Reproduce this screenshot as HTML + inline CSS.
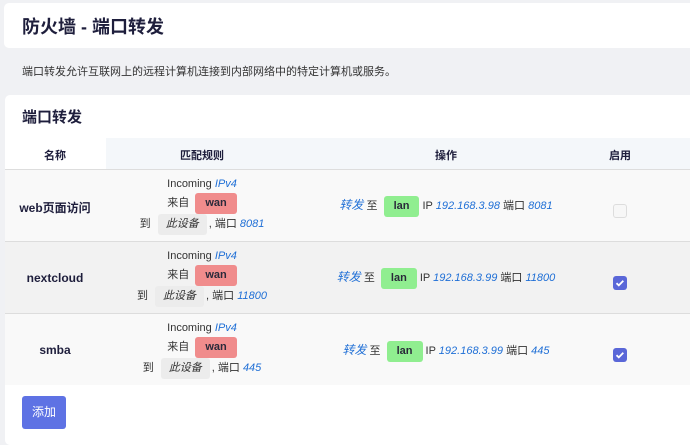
<!DOCTYPE html>
<html><head><meta charset="utf-8">
<style>
*{margin:0;padding:0;box-sizing:border-box}
body{width:690px;height:438px;background:#f0f1f4;font-family:"Liberation Sans","Noto Sans CJK SC",sans-serif;color:#32325d;position:relative;overflow:hidden;font-size:11px}
.a{position:absolute}
.card{background:#fff;border-radius:5px}
.h1{font-size:18px;font-weight:bold;color:#1e1e3c}
.t{position:absolute;text-align:center;white-space:nowrap;font-size:11px;color:#333}
.i{color:#1f6fd6;font-style:italic}
.wan{display:inline-block;background:#f08c8c;border-radius:3px;padding:0 10px;height:21px;line-height:21px;font-weight:bold;color:#2a2a3a;margin-left:3px}
.lan{display:inline-block;background:#90ee90;border-radius:3px;padding:0 10px;height:21px;line-height:21px;font-weight:bold;color:#2a2a3a;margin:0 3px}
.dev{display:inline-block;background:#ececec;border-radius:3px;padding:0 8px;height:21px;line-height:21px;font-style:italic;margin:0 2px 0 4px}
.name{position:absolute;width:100px;text-align:center;font-weight:bold;font-size:12px;color:#1e1e3c}
.cb{position:absolute;left:613px;width:14px;height:14px;border-radius:3px}
</style></head><body>
<div class="a card" style="left:4px;top:3px;width:700px;height:45px"></div>
<div class="a h1" style="left:22px;top:13px">防火墙 - 端口转发</div>
<div class="a" style="left:22px;top:63px;font-size:11px;color:#333">端口转发允许互联网上的远程计算机连接到内部网络中的特定计算机或服务。</div>
<div class="a card" style="left:5px;top:95px;width:700px;height:350px"></div>
<div class="a" style="left:22px;top:106px;font-size:15px;font-weight:bold;color:#1e1e3c">端口转发</div>
<div class="a" style="left:106px;top:138px;width:584px;height:31px;background:#f4f7fa"></div>
<div class="a" style="left:5px;top:169px;width:685px;height:1px;background:#ddd"></div>
<div class="t" style="left:5px;width:100px;top:147px;font-weight:bold;color:#1e1e3c">名称</div>
<div class="t" style="left:152px;width:100px;top:147px;font-weight:bold;color:#1e1e3c">匹配规则</div>
<div class="t" style="left:396px;width:100px;top:147px;font-weight:bold;color:#1e1e3c">操作</div>
<div class="t" style="left:570px;width:100px;top:147px;font-weight:bold;color:#1e1e3c">启用</div>

<div class="a" style="left:5px;top:170px;width:685px;height:71px;background:#f9f9f9"></div>
<div class="a" style="left:5px;top:241px;width:685px;height:1px;background:#ddd"></div>
<div class="a" style="left:5px;top:242px;width:685px;height:71px;background:#f2f2f2"></div>
<div class="a" style="left:5px;top:313px;width:685px;height:1px;background:#ddd"></div>
<div class="a" style="left:5px;top:314px;width:685px;height:71px;background:#f9f9f9"></div>

<!-- row1 -->
<div class="name" style="left:5px;top:199px">web页面访问</div>
<div class="t" style="left:102px;width:200px;top:178px">Incoming <span class="i">IPv4</span></div>
<div class="t" style="left:102px;width:200px;top:193px;line-height:21px">来自 <span class="wan">wan</span></div>
<div class="t" style="left:102px;width:200px;top:214px;line-height:21px">到 <span class="dev">此设备</span>, 端口 <span class="i">8081</span></div>
<div class="t" style="left:296px;width:300px;top:195px;line-height:21px"><span class="i" style="font-size:12px">转发</span> 至 <span class="lan">lan</span>IP <span class="i">192.168.3.98</span> 端口 <span class="i">8081</span></div>
<div class="cb" style="top:204px;background:#f7f7f7;border:1px solid #ddd"></div>

<!-- row2 -->
<div class="name" style="left:5px;top:271px">nextcloud</div>
<div class="t" style="left:102px;width:200px;top:250px">Incoming <span class="i">IPv4</span></div>
<div class="t" style="left:102px;width:200px;top:265px;line-height:21px">来自 <span class="wan">wan</span></div>
<div class="t" style="left:102px;width:200px;top:286px;line-height:21px">到 <span class="dev">此设备</span>, 端口 <span class="i">11800</span></div>
<div class="t" style="left:296px;width:300px;top:267px;line-height:21px"><span class="i" style="font-size:12px">转发</span> 至 <span class="lan">lan</span>IP <span class="i">192.168.3.99</span> 端口 <span class="i">11800</span></div>
<div class="cb" style="top:276px;background:#5a67d8"><svg width="14" height="14" viewBox="0 0 14 14"><path d="M3.5 7.2l2.3 2.2 4.5-4.6" stroke="#fff" stroke-width="1.8" fill="none"/></svg></div>

<!-- row3 -->
<div class="name" style="left:5px;top:343px">smba</div>
<div class="t" style="left:102px;width:200px;top:322px">Incoming <span class="i">IPv4</span></div>
<div class="t" style="left:102px;width:200px;top:337px;line-height:21px">来自 <span class="wan">wan</span></div>
<div class="t" style="left:102px;width:200px;top:358px;line-height:21px">到 <span class="dev">此设备</span>, 端口 <span class="i">445</span></div>
<div class="t" style="left:296px;width:300px;top:340px;line-height:21px"><span class="i" style="font-size:12px">转发</span> 至 <span class="lan">lan</span>IP <span class="i">192.168.3.99</span> 端口 <span class="i">445</span></div>
<div class="cb" style="top:348px;background:#5a67d8"><svg width="14" height="14" viewBox="0 0 14 14"><path d="M3.5 7.2l2.3 2.2 4.5-4.6" stroke="#fff" stroke-width="1.8" fill="none"/></svg></div>

<div class="a" style="left:22px;top:396px;width:44px;height:33px;background:#5e72e4;border-radius:3px;color:#fff;text-align:center;line-height:33px;font-size:12px">添加</div>
</body></html>
